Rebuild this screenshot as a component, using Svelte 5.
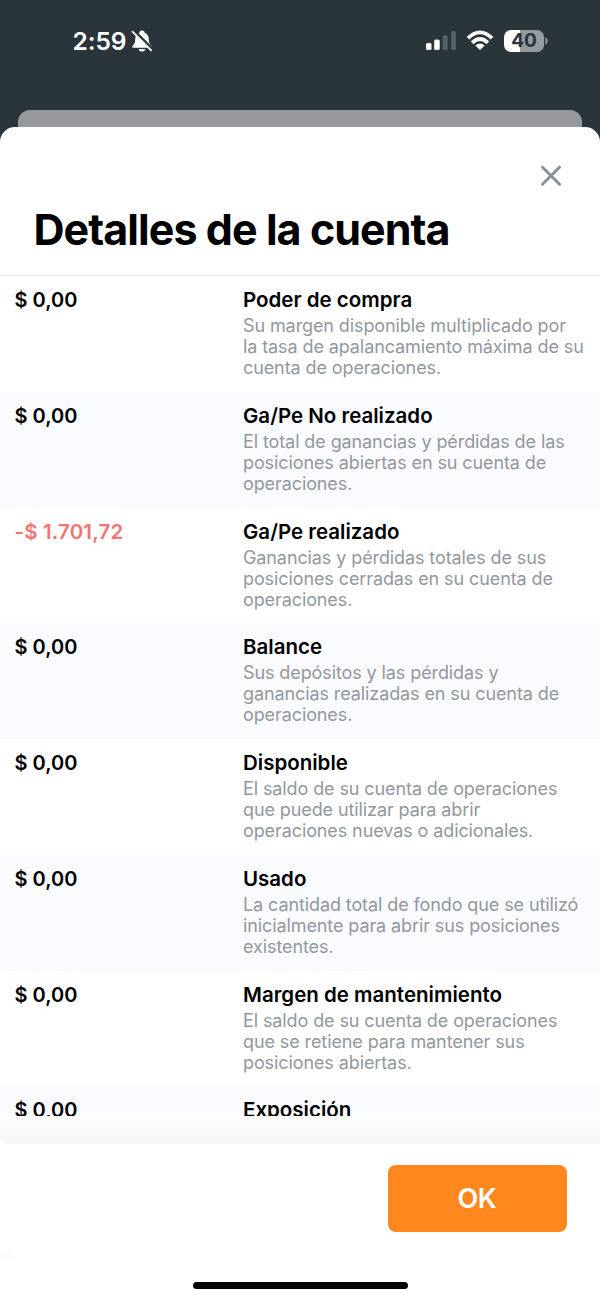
<script>
  const rows = [
    { value: '$ 0,00', title: 'Poder de compra', lines: ['Su margen disponible multiplicado por', 'la tasa de apalancamiento máxima de su', 'cuenta de operaciones.'] },
    { value: '$ 0,00', title: 'Ga/Pe No realizado', lines: ['El total de ganancias y pérdidas de las', 'posiciones abiertas en su cuenta de', 'operaciones.'] },
    { value: '-$ 1.701,72', title: 'Ga/Pe realizado', negative: true, lines: ['Ganancias y pérdidas totales de sus', 'posiciones cerradas en su cuenta de', 'operaciones.'] },
    { value: '$ 0,00', title: 'Balance', lines: ['Sus depósitos y las pérdidas y', 'ganancias realizadas en su cuenta de', 'operaciones.'] },
    { value: '$ 0,00', title: 'Disponible', lines: ['El saldo de su cuenta de operaciones', 'que puede utilizar para abrir', 'operaciones nuevas o adicionales.'] },
    { value: '$ 0,00', title: 'Usado', lines: ['La cantidad total de fondo que se utilizó', 'inicialmente para abrir sus posiciones', 'existentes.'] },
    { value: '$ 0,00', title: 'Margen de mantenimiento', lines: ['El saldo de su cuenta de operaciones', 'que se retiene para mantener sus', 'posiciones abiertas.'] },
    { value: '$ 0,00', title: 'Exposición', lines: [] }
  ];
</script>

<div class="screen">
  <header class="status">
    <div class="clock">
      <span class="time">2:59</span>
      <svg class="bell" width="22" height="24" viewBox="0 0 22 24">
        <path d="M11 1.600c-1.600 0-2.500 1-2.600 2.200C5.500 5 4.200 7.300 4.200 10.300c0 3.500-.8 4.700-2.300 6.100-.9.900-.9 2.400.6 2.400h17c1.500 0 1.500-1.500.6-2.400-1.500-1.400-2.300-2.600-2.300-6.100 0-3-1.300-5.300-4.200-6.500-.1-1.200-1-2.200-2.600-2.200zM7.700 19.900h6.600c-.4 1.800-1.700 2.700-3.300 2.700s-2.900-.9-3.300-2.700z" fill="#fff" />
        <path d="M2.900 2.100 21 20.200" stroke="#29343b" stroke-width="3.600" />
        <path d="M1.500 2.700 20.200 21.400" stroke="#fff" stroke-width="1.800" stroke-linecap="round" />
      </svg>
    </div>
    <div class="indicators">
      <svg width="32" height="22" viewBox="0 0 32 22">
        <rect x="0" y="13" width="5.500" height="7" rx="1.500" fill="#fff" />
        <rect x="8.200" y="9.500" width="5.500" height="10.500" rx="1.500" fill="#fff" />
        <rect x="16.700" y="5.300" width="5" height="14.700" rx="1.500" fill="#566067" />
        <rect x="25" y="1" width="5" height="19" rx="1.500" fill="#566067" />
      </svg>
      <svg class="wifi" width="28" height="22" viewBox="0 0 28 22">
        <g fill="none" stroke="#fff" stroke-width="3.700">
          <path d="M2 8.200Q14-3.400 26 8.200" />
          <path d="M6.200 12.800Q14 5.200 21.800 12.800" />
        </g>
        <path d="M9.300 15.500Q14 11.600 18.700 15.500L14.600 19.600Q14 20.200 13.400 19.600Z" fill="#fff" />
      </svg>
      <div class="battery"><span>40</span></div>
      <svg class="cap" width="4" height="8" viewBox="0 0 4 8"><path d="M0 0Q3 1.500 3 4T0 8Z" fill="#7f868b" /></svg>
    </div>
  </header>

  <div class="behind"></div>

  <main class="sheet">
    <div class="heading">
      <button class="close" aria-label="Cerrar">
        <svg width="22" height="22" viewBox="0 0 22 22"><path d="M2.500 2.200 19.500 19.200M19.500 2.200 2.500 19.200" fill="none" stroke="#8b9096" stroke-width="3" stroke-linecap="round" /></svg>
      </button>
      <h1>Detalles de la cuenta</h1>
    </div>

    <section class="list">
      {#each rows as row}
        <article class="row">
          <div class="value" class:negative={row.negative}>{row.value}</div>
          <div class="info">
            <h2>{row.title}</h2>
            <p>{#each row.lines as line}<span>{line}</span>{/each}</p>
          </div>
        </article>
      {/each}
    </section>

    <div class="fade"></div>

    <footer>
      <button class="ok">OK</button>
      <div class="home"></div>
    </footer>
  </main>
</div>

<style>
  :global(body) { margin: 0; background: #29343b; }
  .screen {
    width: 600px;
    height: 1300px;
    display: flex;
    flex-direction: column;
    overflow: hidden;
    background: #29343b;
    font-family: Inter, "Liberation Sans", sans-serif;
    color: #000;
  }
  button { border: 0; padding: 0; background: none; font-family: inherit; }
  .status {
    height: 110px;
    flex: none;
    box-sizing: border-box;
    padding: 26px 51px 0 72.500px;
    display: flex;
    justify-content: space-between;
    align-items: flex-start;
    color: #fff;
  }
  .clock, .indicators { display: flex; align-items: center; height: 30px; }
  .time { font-size: 24.500px; font-weight: 600; letter-spacing: -0.100px; }
  .bell { margin-left: 5px; }
  .wifi { margin-left: 8px; }
  .battery {
    width: 40px;
    height: 22px;
    margin-left: 10px;
    border-radius: 7px;
    background: linear-gradient(90deg, #fff 40%, #969b9f 40%);
    color: #29343b;
    font-size: 19px;
    font-weight: 700;
    line-height: 22px;
    text-align: center;
  }
  .cap { margin-left: 1px; }
  .behind { flex: none; height: 17px; margin: 0 18px; border-radius: 12px 12px 0 0; background: #969a9e; }
  .sheet {
    flex: 1;
    min-height: 0;
    display: flex;
    flex-direction: column;
    background: #fff;
    border-radius: 15px 15px 0 0;
  }
  .heading {
    flex: none;
    height: 149px;
    box-sizing: border-box;
    border-bottom: 1px solid #e8e8e9;
    padding: 38px 38px 0 33.500px;
    display: flex;
    flex-direction: column;
  }
  .close { align-self: flex-end; width: 22px; height: 22px; }
  .close svg { display: block; }
  h1 { margin: 16px 0 0; font-size: 43px; line-height: 52px; font-weight: 700; letter-spacing: -0.940px; white-space: nowrap; }
  .list { flex: none; height: 840px; overflow: hidden; }
  .row {
    height: 115.780px;
    box-sizing: border-box;
    padding: 12px 0 0 14.500px;
    display: grid;
    grid-template-columns: 228.500px 1fr;
    align-content: start;
  }
  .row:nth-child(even) { background: #fafbff; }
  .value, h2 { margin: 0; font-size: 20px; line-height: 25px; font-weight: 600; white-space: nowrap; }
  h2 { font-size: 20.500px; line-height: 24px; }
  .value.negative { color: #f37474; font-size: 20.500px; line-height: 24px; letter-spacing: 0.150px; }
  p { margin: 3px 0 0; color: #92989e; font-size: 18px; line-height: 21px; letter-spacing: -0.100px; white-space: nowrap; }
  p span { display: block; }
  .fade {
    flex: none;
    height: 28px;
    background:
      linear-gradient(#fff, #fff) 0 100% / 4px 4px no-repeat,
      linear-gradient(#fefefe, #f5f5f5);
  }
  footer {
    flex: 1;
    display: flex;
    flex-direction: column;
    padding-top: 21px;
    background: linear-gradient(155deg, #f9f9f9, #fff 60%) 0 109px / 15px 14px no-repeat, #fff;
  }
  .ok {
    align-self: flex-end;
    width: 179px;
    height: 67px;
    margin-right: 33.500px;
    border-radius: 8px;
    background: #ff871e;
    color: #fff;
    font-size: 27px;
    font-weight: 600;
    letter-spacing: -0.300px;
  }
  .home { align-self: center; width: 215px; height: 7px; margin-top: 49.500px; border-radius: 4px; background: #000; }
</style>
